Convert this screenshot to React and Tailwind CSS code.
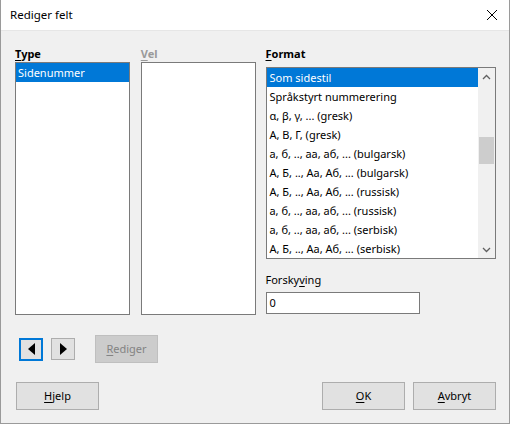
import React from "react";

const formats = [
  "Som sidestil",
  "Språkstyrt nummerering",
  "α, β, γ, ... (gresk)",
  "Α, Β, Γ, (gresk)",
  "а, б, .., аа, аб, ... (bulgarsk)",
  "А, Б, .., Аа, Аб, ... (bulgarsk)",
  "А, Б, .., Аа, Аб, ... (russisk)",
  "а, б, .., аа, аб, ... (russisk)",
  "а, б, .., аа, аб, ... (serbisk)",
  "А, Б, .., Аа, Аб, ... (serbisk)",
];

const Mn = ({ children }) => <span className="underline underline-offset-2">{children}</span>;

const App = () => {
  return (
    <div
      className="w-[510px] h-[424px] flex flex-col border-x border-b border-[#9a9a9a] text-[11px] text-black bg-[#f0f0f0]"
      style={{ fontFamily: '"Noto Sans", "DejaVu Sans", sans-serif' }}
    >
      {/* Titel */}
      <div className="h-[31px] shrink-0 bg-white flex items-center justify-between pl-[9px] pr-[11px] border-b border-[#e6e6e6]">
        <span className="text-[11.5px]">Rediger felt</span>
        <svg width="12" height="12" viewBox="0 0 12 12">
          <path d="M1 1 L11 11 M11 1 L1 11" stroke="#000" strokeWidth="1" />
        </svg>
      </div>

      <div className="flex-1 flex flex-col pl-[14px] pr-[13px] pt-[15px]">
        {/* Lister */}
        <div className="flex">
          <div className="w-[115px] flex flex-col">
            <div className="h-[15px] leading-[15px] font-bold">
              <Mn>T</Mn>ype
            </div>
            <div className="mt-[1px] h-[253px] bg-white border border-[#7a7a7a]">
              <div className="h-[19px] leading-[19px] bg-[#0078d7] text-white pl-[2px]">Sidenummer</div>
            </div>
          </div>

          <div className="w-[115px] ml-[11px] flex flex-col">
            <div className="h-[15px] leading-[15px] font-bold text-[#9a9a9a]">
              <Mn>V</Mn>el
            </div>
            <div className="mt-[1px] h-[253px] bg-white border border-[#7a7a7a]" />
          </div>

          <div className="w-[231px] ml-[10px] flex flex-col">
            <div className="h-[15px] leading-[15px] font-bold">
              <Mn>F</Mn>ormat
            </div>
            <div className="mt-[6px] h-[192px] bg-white border border-[#7a7a7a] flex">
              <div className="flex-1 flex flex-col">
                {formats.map((f, i) => (
                  <div
                    key={i}
                    className={
                      i === 0
                        ? "h-[19px] leading-[20px] pl-[3px] bg-[#0078d7] text-white whitespace-nowrap"
                        : "h-[19px] leading-[20px] pl-[3px] whitespace-nowrap"
                    }
                  >
                    {f}
                  </div>
                ))}
              </div>
              <div className="w-[17px] bg-[#f0f0f0] flex flex-col">
                <div className="h-[17px] flex items-center justify-center">
                  <svg width="9" height="6" viewBox="0 0 9 6">
                    <path d="M1 5 L4.5 1.5 L8 5" fill="none" stroke="#606060" strokeWidth="1.3" />
                  </svg>
                </div>
                <div className="h-[52px]" />
                <div className="mx-[1px] h-[27px] bg-[#cdcdcd]" />
                <div className="flex-1" />
                <div className="h-[17px] flex items-center justify-center">
                  <svg width="9" height="6" viewBox="0 0 9 6">
                    <path d="M1 1 L4.5 4.5 L8 1" fill="none" stroke="#606060" strokeWidth="1.3" />
                  </svg>
                </div>
              </div>
            </div>

            <div className="mt-[13px] h-[15px] leading-[15px]">
              Forsky<Mn>v</Mn>ing
            </div>
            <div className="mt-[5px] w-[154px] h-[22px] bg-white border border-[#7a7a7a] flex items-center pl-[3px]">
              0
            </div>
          </div>
        </div>

        {/* Pilknapper */}
        <div className="flex items-center mt-[20px] h-[28px]">
          <button className="ml-[4px] w-[24px] h-[23px] border-2 border-[#0078d7] bg-[#e1e1e1] flex items-center justify-center">
            <svg width="7" height="12" viewBox="0 0 7 12">
              <path d="M7 0 L0 6 L7 12 Z" fill="#000" />
            </svg>
          </button>
          <button className="ml-[8px] w-[24px] h-[22px] border border-[#adadad] bg-[#e1e1e1] flex items-center justify-center">
            <svg width="7" height="12" viewBox="0 0 7 12">
              <path d="M0 0 L7 6 L0 12 Z" fill="#000" />
            </svg>
          </button>
          <button className="ml-[20px] w-[63px] h-[28px] border border-[#bfbfbf] bg-[#cccccc] text-[#838383]">
            <Mn>R</Mn>ediger
          </button>
        </div>

        {/* Knapper */}
        <div className="flex mt-[19px]">
          <button className="ml-[1px] w-[83px] h-[28px] border border-[#adadad] bg-[#e1e1e1]">
            <Mn>H</Mn>jelp
          </button>
          <div className="flex-1" />
          <button className="w-[83px] h-[28px] border border-[#adadad] bg-[#e1e1e1]">
            <Mn>O</Mn>K
          </button>
          <button className="ml-[8px] w-[83px] h-[28px] border border-[#adadad] bg-[#e1e1e1]">
            <Mn>A</Mn>vbryt
          </button>
        </div>
      </div>
    </div>
  );
};

export default App;
